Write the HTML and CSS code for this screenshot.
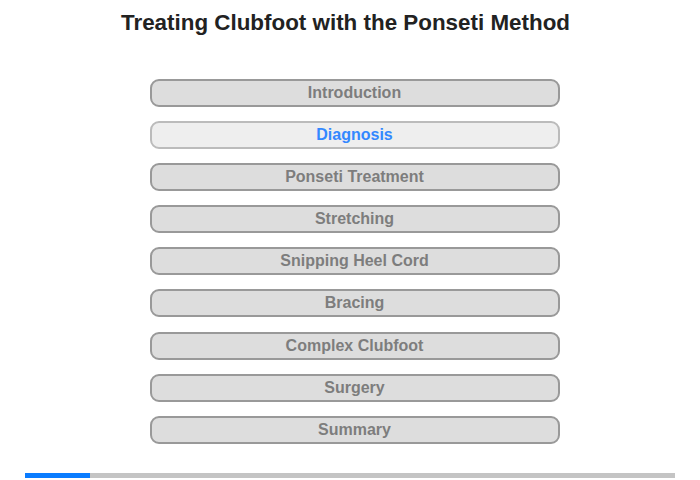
FILE: index.html
```html
<!DOCTYPE html>
<html>
<head>
<meta charset="utf-8">
<link rel="stylesheet" href="styles.css">
</head>
<body>
<div class="page">
  <h1 class="title">Treating Clubfoot with the Ponseti Method</h1>
  <nav class="menu">
    <div class="item">Introduction</div>
    <div class="item active">Diagnosis</div>
    <div class="item">Ponseti Treatment</div>
    <div class="item">Stretching</div>
    <div class="item">Snipping Heel Cord</div>
    <div class="item">Bracing</div>
    <div class="item">Complex Clubfoot</div>
    <div class="item">Surgery</div>
    <div class="item">Summary</div>
  </nav>
  <div class="progress"><div class="fill" style="width:10%"></div></div>
</div>
</body>
</html>
```
FILE: styles.css
```css
html, body {
  margin: 0;
  padding: 0;
  background: #fff;
}
.page {
  width: 700px;
  height: 480px;
  display: flex;
  flex-direction: column;
  align-items: center;
  font-family: "Liberation Sans", Arial, sans-serif;
}
.title {
  margin: 10px 9px 0 0;
  font-size: 22.4px;
  line-height: 26px;
  font-weight: bold;
  color: #222;
}
.menu {
  margin: 43px 0 0 9px;
  display: flex;
  flex-direction: column;
  gap: 14.1px;
}
.item {
  box-sizing: border-box;
  width: 410px;
  height: 28px;
  border: 2px solid #999;
  border-radius: 9px;
  background: #dddddd;
  color: #7d7d7d;
  font-size: 16px;
  font-weight: bold;
  line-height: 24px;
  text-align: center;
}
.item.active {
  background: #eeeeee;
  border-color: #bbbbbb;
  color: #3388ff;
}
.progress {
  margin-top: 29px;
  width: 650px;
  height: 5px;
  background: #c4c4c4;
}
.fill {
  height: 100%;
  background: #0a7cff;
}
```
